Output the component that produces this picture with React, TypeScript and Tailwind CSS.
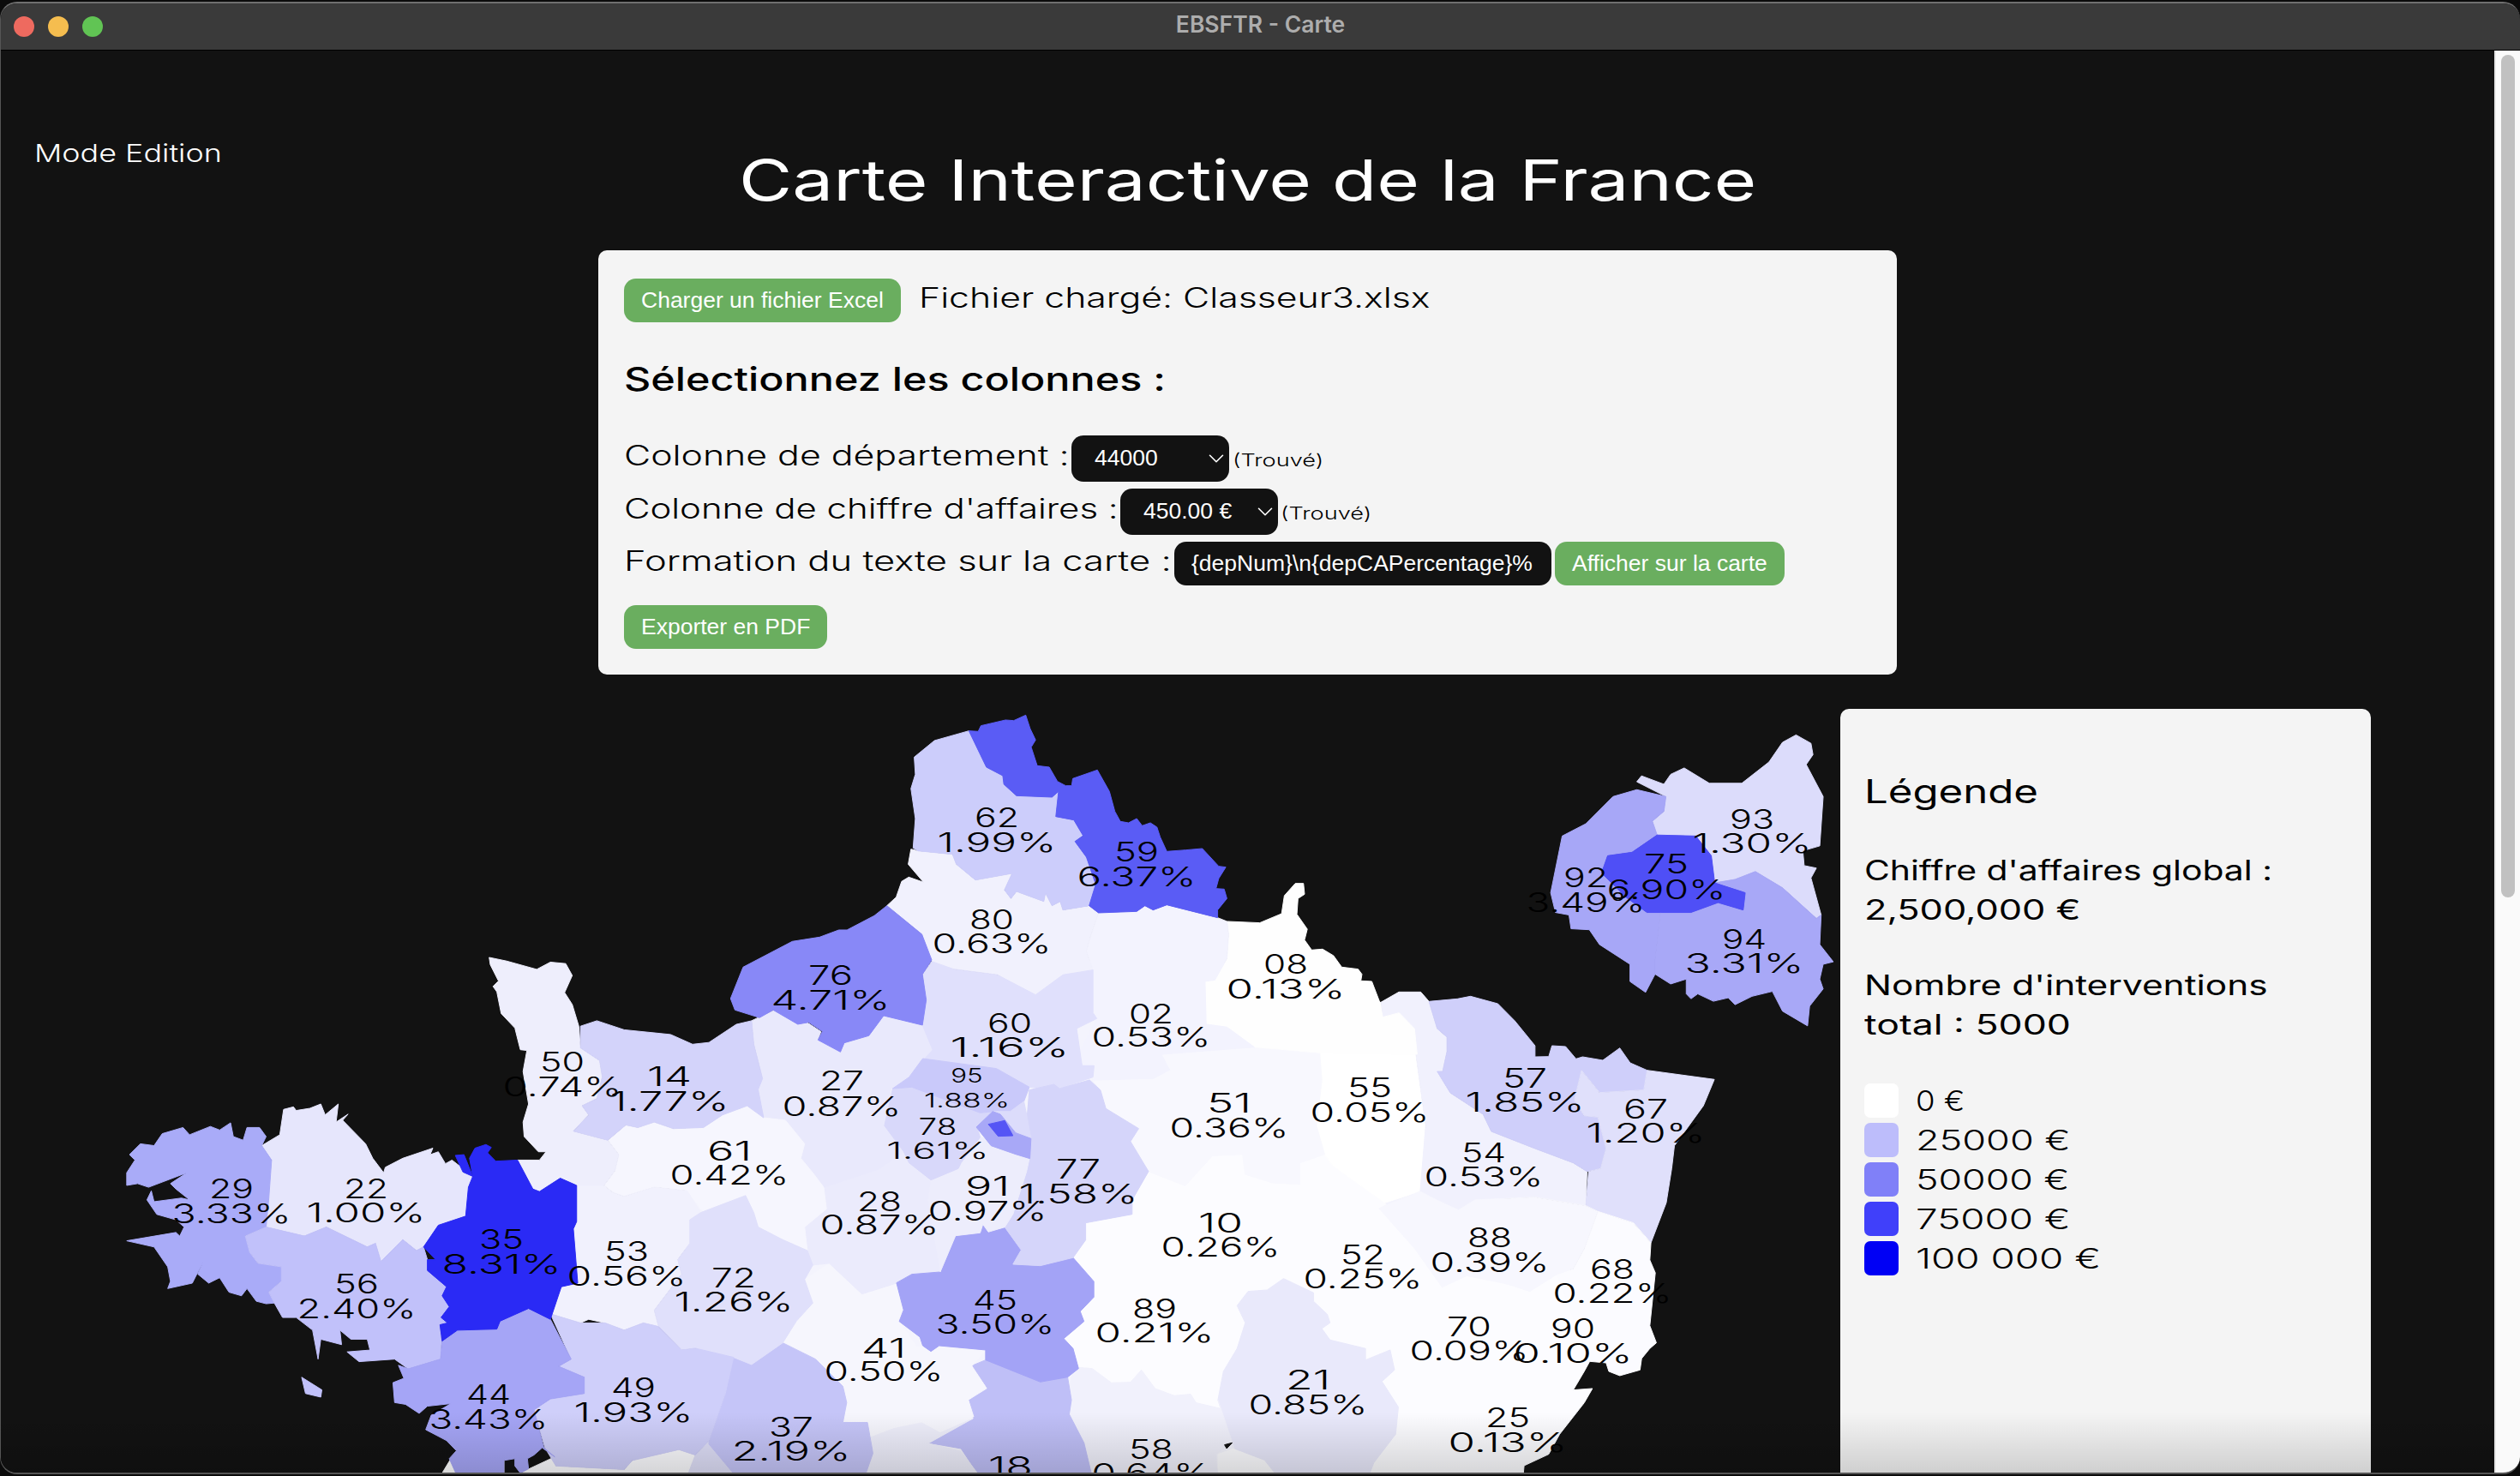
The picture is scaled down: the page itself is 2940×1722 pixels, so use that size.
import { useLayoutEffect, useRef, type ReactNode } from 'react'
import { ChevronDown } from 'lucide-react'

// The screenshot's extended display face isn't installed: Inter is stretched to its measured width.
function Wide({ w, className, children }: { w: number; className?: string; children: ReactNode }) {
  const inner = useRef<HTMLSpanElement>(null)

  useLayoutEffect(() => {
    const el = inner.current
    if (!el) return
    el.style.transform = `scaleX(${w / el.offsetWidth})`
  }, [w])

  return (
    <span className={`inline-block shrink-0 whitespace-nowrap ${className ?? ''}`} style={{ width: w }}>
      <span ref={inner} className="inline-block origin-left">
        {children}
      </span>
    </span>
  )
}

// Each department is traced in one of these crops of the reference.
const FRAMES = {
  a: 'translate(100 1060) scale(0.6378 0.4222)',
  b: 'translate(800 800) scale(0.6378 0.3333)',
  c: 'translate(1000 1200) scale(0.6378 0.3333)',
  d: 'translate(1700 820) scale(0.7908 0.5754)',
}

type Region = { frame: keyof typeof FRAMES; fill: string; points: string }

const REGIONS: Region[] = [
  { frame: 'c', fill: '#fcfcff', points: '395,802 418,740 418,680 503,650 503,600 533,500 600,550 650,445 705,440 710,510 760,540 810,545 810,470 855,440 870,480 965,610 1030,770 1070,905 1115,865 1180,890 1230,920 1280,860 1340,1165 1330,1200 1310,1265 1345,1260 1330,1310 1285,1420 1265,1490 1220,1530 1218,1570 660,1570 660,1490 690,1470 660,1300 665,1330 620,1310 610,1280 580,1285 545,1260 520,1195 500,1238 465,1240 430,1190 395,1185 405,1190 395,1120 378,1085 415,1025 408,990 433,940 433,885' },
  { frame: 'c', fill: '#ffffff', points: '846,85 871,-80 958,-92 961,-40 1020,60 1040,340 1030,570 965,610 870,480 855,440 840,340 850,180' },
  { frame: 'c', fill: '#f1f1fd', points: '958,-92 991,-128 1031,-128 1046,-95 1061,0 1079,30 1079,80 1071,150 1061,150 1085,225 1145,300 1160,360 1240,420 1310,470 1335,500 1333,620 1240,590 1130,600 1100,635 1060,600 1030,570 1040,340 1020,60 961,-40' },
  { frame: 'c', fill: '#cfcffa', points: '1046,-95 1098,-104 1122,-113 1172,-87 1203,-27 1240,60 1240,99 1265,98 1271,60 1296,63 1315,106 1327,99 1364,111 1395,68 1414,120 1445,146 1439,215 1358,224 1325,146 1312,250 1330,305 1355,310 1370,420 1360,490 1335,500 1310,470 1240,420 1160,360 1145,300 1085,225 1061,150 1071,150 1079,80 1079,30 1061,0' },
  { frame: 'c', fill: '#e0e0fb', points: '1325,146 1358,224 1439,215 1445,146 1568,178 1548,270 1495,410 1490,490 1480,610 1452,750 1420,680 1355,640 1333,620 1338,500 1360,490 1370,420 1355,310 1330,305 1312,250' },
  { frame: 'c', fill: '#fbfbff', points: '1355,640 1420,680 1452,750 1450,810 1460,855 1450,1040 1462,1100 1450,1120 1435,1155 1432,1195 1395,1215 1375,1200 1370,1170 1340,1165 1280,860 1310,840 1330,770' },
  { frame: 'c', fill: '#f7f7fe', points: '965,620 1030,570 1060,600 1100,635 1130,600 1240,590 1333,620 1355,640 1330,770 1310,840 1280,860 1230,920 1200,900 1180,890 1115,865 1070,905 1020,770 955,630' },
  { frame: 'c', fill: '#f8f8fe', points: '431,180 541,175 571,145 556,90 726,65 846,85 850,180 840,340 855,440 810,470 810,545 760,540 710,510 705,440 650,445 600,550 533,500 500,395 515,350 455,280 445,215' },
  { frame: 'c', fill: '#e9e9fb', points: '780,875 835,925 835,955 860,1000 865,1030 850,1050 865,1090 930,1120 930,1160 975,1125 983,1195 960,1235 990,1325 985,1420 945,1520 935,1570 770,1570 745,1510 690,1470 660,1300 670,1200 695,1120 710,1030 695,970 715,920 750,915' },
  { frame: 'c', fill: '#f1f1fc', points: '395,1185 430,1190 465,1240 500,1238 520,1195 545,1260 580,1285 610,1280 620,1310 665,1330 660,1300 690,1470 675,1450 670,1470 655,1490 660,1570 430,1570 400,1400 385,1330 390,1250' },
  { frame: 'c', fill: '#bfbff7', points: '235,1160 335,1237 385,1220 392,1300 388,1350 415,1450 430,1570 225,1570 190,1470 130,1450 160,1390 215,1360 205,1300 235,1250 210,1180' },

  { frame: 'a', fill: '#ffffff', points: '648,1570 668,1520 765,1525 765,1570' },
  { frame: 'a', fill: '#fbfbfe', points: '858,1515 860,1540 985,1550 1000,1525 1085,1495 1115,1510 1140,1480 1190,1570 780,1570' },
  { frame: 'a', fill: '#dfdff8', points: '1115,1510 1140,1470 1190,1570 1100,1570' },
  { frame: 'a', fill: '#f6f6fd', points: '1275,1200 1300,1140 1330,1090 1315,1025 1360,980 1420,1065 1483,1035 1495,1090 1488,1140 1520,1210 1531,1209 1545,1225 1560,1209 1646,1221 1621,1264 1648,1326 1614,1358 1623,1409 1563,1449 1529,1421 1478,1437 1436,1461 1385,1409 1392,1365 1385,1320 1335,1245' },
  { frame: 'a', fill: '#eeeefb', points: '1436,1461 1478,1437 1529,1421 1563,1449 1623,1409 1541,1478 1601,1500 1636,1570 1420,1570 1440,1505' },
  { frame: 'a', fill: '#c5c5f8', points: '1185,1240 1218,1260 1275,1200 1335,1245 1385,1320 1392,1365 1385,1420 1430,1420 1440,1505 1425,1570 1190,1570 1140,1480 1140,1470 1170,1340' },
  { frame: 'a', fill: '#ebebfc', points: '1308,690 1330,730 1350,770 1355,830 1315,880 1320,945 1330,985 1360,980 1420,1065 1483,1035 1511,1011 1563,1005 1541,806 1546,751 1506,703 1496,672 1450,720' },
  { frame: 'a', fill: '#e9e9fc', points: '1218,310 1260,280 1305,318 1320,315 1345,340 1340,360 1380,395 1390,370 1435,350 1460,295 1531,323 1550,391 1530,425 1506,470 1473,498 1461,601 1496,672 1450,720 1350,770 1330,730 1308,690 1315,650 1280,585 1240,578 1230,500 1238,470 1222,375' },
  { frame: 'a', fill: '#f6f6fe', points: '955,640 988,598 1010,605 1040,590 1075,608 1130,605 1165,570 1210,545 1240,578 1280,585 1315,650 1308,690 1330,730 1350,770 1355,830 1315,880 1320,945 1275,915 1230,880 1222,840 1207,793 1130,840 1100,780 1040,770 985,795 965,785 948,765 968,725 975,680' },
  { frame: 'a', fill: '#f1f1fd', points: '898,765 948,765 965,785 985,795 1040,770 1100,780 1125,840 1105,860 1105,925 1083,970 1090,1010 1040,1110 1048,1155 1020,1145 985,1165 950,1145 920,1135 905,1145 850,1120 870,1045 900,1035 892,885 898,865' },
  { frame: 'a', fill: '#e0e0fb', points: '1125,840 1207,793 1222,840 1230,880 1275,915 1320,945 1330,985 1315,1025 1330,1090 1300,1140 1275,1200 1218,1260 1185,1240 1115,1215 1090,1220 1048,1155 1040,1110 1090,1010 1083,970 1105,925 1105,860' },
  { frame: 'a', fill: '#cfcffa', points: '850,1120 905,1145 950,1145 985,1165 1020,1145 1048,1155 1090,1220 1115,1215 1185,1240 1170,1340 1140,1470 1115,1510 1085,1495 1000,1525 985,1550 860,1540 840,1490 820,1385 850,1355 912,1340 912,1295 865,1265 888,1245' },
  { frame: 'a', fill: '#eeeefc', points: '738,135 770,145 825,168 850,148 878,152 890,185 876,232 890,265 902,325 905,385 940,420 945,465 935,525 908,545 920,570 892,615 955,640 975,680 968,725 948,765 898,765 868,745 830,782 818,775 790,695 830,695 842,672 828,672 802,630 800,590 810,540 800,450 807,392 795,390 785,330 760,290 752,230 745,215 755,200 740,155' },
  { frame: 'a', fill: '#d3d3fa', points: '905,325 935,310 985,335 1070,348 1110,375 1140,370 1190,320 1218,310 1222,375 1238,470 1230,500 1240,578 1210,545 1165,570 1130,605 1075,608 1040,590 1010,605 988,598 955,640 892,615 920,570 908,545 935,525 945,465 940,420 905,385' },
  { frame: 'a', fill: '#e6e6fc', points: '322,655 355,625 362,555 380,548 385,558 410,552 430,540 438,570 462,540 458,590 480,568 470,585 512,650 525,690 545,730 548,715 580,690 635,662 630,680 645,672 658,705 670,695 700,730 710,745 695,850 645,875 618,935 605,945 580,915 540,975 530,925 515,935 440,880 400,905 330,880 340,695' },
  { frame: 'a', fill: '#a9abf8', points: '140,622 178,605 190,625 228,602 245,612 265,592 270,630 288,640 295,605 318,605 330,630 322,655 340,695 335,800 330,880 292,905 300,950 315,980 358,990 358,1030 335,1060 345,1090 330,1092 312,1085 295,1050 285,1070 262,1060 245,1020 225,1035 205,1010 215,975 195,1035 150,1050 155,1030 150,990 125,935 75,918 165,895 172,905 180,880 165,860 130,845 112,805 120,780 125,810 175,800 190,805 165,775 155,760 185,730 115,770 95,760 75,765 75,730 90,695 80,680 100,650 125,655' },
  { frame: 'a', fill: '#c1c1fa', points: '292,905 330,880 400,905 440,880 515,935 530,925 540,975 580,915 605,945 618,935 625,970 625,1000 660,1045 652,1070 665,1100 650,1130 662,1145 648,1150 651,1195 649,1245 590,1272 565,1245 500,1252 478,1225 520,1220 515,1190 485,1190 465,1165 468,1205 430,1190 425,1245 415,1165 385,1130 360,1130 345,1090 335,1060 358,1030 358,990 315,980 300,950' },
  { frame: 'a', fill: '#c1c1fa', points: '395,1295 432,1330 430,1350 402,1340' },
  { frame: 'a', fill: '#a5a5f6', points: '652,1195 680,1165 752,1162 758,1140 810,1105 850,1135 888,1245 865,1265 912,1295 912,1340 850,1355 820,1385 838,1490 858,1515 835,1490 820,1510 808,1520 810,1548 795,1560 785,1540 785,1520 765,1525 765,1570 680,1570 665,1520 678,1498 660,1470 622,1440 632,1400 668,1368 625,1375 610,1395 585,1370 565,1365 562,1310 582,1298 572,1262 590,1272 649,1245' },
  { frame: 'a', fill: '#2a2af5', points: '700,770 708,740 702,690 712,662 732,652 742,660 735,675 750,698 790,695 818,775 830,782 868,745 898,765 898,865 892,885 900,1035 870,1045 850,1135 810,1105 758,1140 752,1162 680,1165 652,1195 648,1150 662,1145 650,1130 665,1100 652,1070 660,1045 625,1000 625,970 640,970 618,935 645,875 695,850' },
  { frame: 'a', fill: '#2a2af5', points: '676,682 692,680 708,740 690,728' },

  { frame: 'b', fill: '#fefefe', points: '990,825 1050,830 1090,798 1095,735 1115,692 1130,692 1132,730 1120,745 1118,800 1137,852 1132,890 1145,925 1165,922 1185,945 1200,985 1230,992 1237,1010 1235,1033 1255,1035 1270,1110 1275,1160 1305,1145 1333,1200 1338,1290 1160,1285 1040,1265 990,1195 952,1185 950,1035 968,1030 990,955 993,870' },
  { frame: 'b', fill: '#f3f3fe', points: '755,795 825,790 840,770 855,785 880,767 973,812 990,825 993,870 990,955 968,1030 950,1035 952,1185 990,1195 1040,1265 870,1290 885,1345 855,1375 745,1380 747,1330 725,1330 715,1300 752,1165 745,1145 745,995 733,930 740,880' },
  { frame: 'b', fill: '#f1f1fd', points: '412,572 425,578 488,590 495,625 530,680 597,657 583,715 595,745 605,720 655,755 658,725 670,770 685,755 690,785 738,770 755,795 740,880 733,930 745,995 690,1012 640,1082 570,1012 490,992 470,1000 450,965 432,870 368,770 385,740 395,685 408,670 435,688 407,625' },
  { frame: 'b', fill: '#e0e0fc', points: '450,965 490,992 570,1012 640,1082 690,1012 745,995 745,1145 752,1165 715,1200 725,1330 747,1330 745,1370 690,1405 665,1415 630,1405 570,1340 520,1350 425,1330 452,1275 433,1188 440,1100 433,1010' },
  { frame: 'b', fill: '#cccdfb', points: '518,158 455,192 418,250 420,310 412,360 420,465 416,568 425,578 488,590 495,625 530,680 597,657 583,715 595,745 605,720 655,755 658,725 670,770 685,755 690,785 738,770 750,695 733,600 712,545 727,525 710,470 677,458 682,370 670,390 605,385 582,345 580,315 550,285' },
  { frame: 'b', fill: '#5a5cf5', points: '518,158 535,160 540,140 585,120 600,122 622,103 630,150 640,190 632,215 643,280 665,285 680,335 695,350 706,350 708,325 753,295 775,370 785,440 795,475 810,480 825,465 835,490 850,480 862,495 868,530 880,580 915,575 945,570 975,632 988,635 975,675 970,710 985,712 990,745 973,785 973,812 880,767 855,785 840,770 825,790 755,795 738,770 750,695 733,600 712,545 727,525 710,470 677,458 682,370 670,390 605,385 582,345 580,315 550,285' },
  { frame: 'b', fill: '#8888f7', points: '368,770 345,805 295,855 280,855 245,880 195,895 105,985 82,1095 90,1135 135,1162 160,1135 205,1185 225,1178 250,1210 242,1240 283,1282 290,1250 335,1225 362,1155 433,1188 440,1100 433,1010 450,960 432,870' },

  { frame: 'c', fill: '#a3a3f6', points: '180,725 225,715 230,685 240,712 270,695 300,775 285,825 335,830 395,802 433,885 433,940 408,990 415,1025 378,1085 395,1120 405,1190 385,1220 335,1237 235,1160 235,1125 150,1110 135,1130 120,1110 115,1080 77,1025 85,985 72,890 100,860 152,852' },
  { frame: 'c', fill: '#d5d5fa', points: '425,180 445,215 455,280 515,350 500,395 533,500 503,600 503,650 418,680 418,740 395,802 335,830 285,825 300,775 270,695 285,650 310,450 318,385 310,330 315,215 360,195 370,210' },
  { frame: 'c', fill: '#ededfc', points: '135,530 185,490 190,470 225,380 260,410 285,440 315,455 310,500 285,650 270,695 240,712 230,685 225,715 180,725 152,852 130,600' },
  { frame: 'c', fill: '#d8d8fa', points: '65,210 100,205 225,295 250,290 220,350 225,380 190,470 185,490 135,530 95,470 85,430 50,340' },
  { frame: 'c', fill: '#c9c9fa', points: '120,105 255,140 315,205 305,255 280,290 250,290 225,295 100,205 65,210 95,170' },
  { frame: 'c', fill: '#dcdcfb', points: '250,290 262,300 290,365 318,385 312,320 305,255 280,290' },
  { frame: 'c', fill: '#a8a8f7', points: '248,290 218,345 245,410 290,440 316,455 318,385 290,365 262,300' },
  { frame: 'c', fill: '#5555f5', points: '240,335 270,322 285,375 258,377' },
  { frame: 'c', fill: '#121212', points: '672,1457 686,1450 676,1470' },

  { frame: 'd', fill: '#dcdcfb', points: '265,160 272,148 305,165 315,145 335,132 372,163 420,163 460,120 480,80 500,65 522,82 525,105 515,125 540,190 535,290 510,300 512,330 530,335 522,355 537,430 530,437 480,375 440,342 410,358 380,365 375,310 352,270 295,268 288,240 305,220 308,190' },
  { frame: 'd', fill: '#a7a7f7', points: '265,176 308,190 305,220 288,240 295,268 258,303 222,310 213,345 250,395 280,425 300,425 292,520 292,550 278,587 255,565 255,530 210,490 195,460 168,458 165,430 145,425 138,385 155,270 190,245 230,190' },
  { frame: 'd', fill: '#a8a8f7', points: '300,425 345,425 385,405 422,420 425,385 380,365 410,358 440,342 480,375 530,437 537,430 535,490 555,525 540,530 535,560 540,580 520,615 517,655 480,625 465,585 435,595 410,612 400,598 378,605 355,590 345,600 338,590 338,560 315,570 292,550 292,520' },
  { frame: 'd', fill: '#4f4ff6', points: '295,268 352,270 375,310 380,365 425,385 422,420 385,405 345,425 300,425 280,425 250,395 213,345 222,310 258,303' },
]

// id, share, centre x, y of each of the two lines, font size
const LABELS: [string, string, number, number, number, number?][] = [
  ['62', '1.99%', 1163, 953, 982], ['59', '6.37%', 1326, 993, 1022], ['80', '0.63%', 1157, 1072, 1100],
  ['76', '4.71%', 969, 1137, 1166], ['08', '0.13%', 1500, 1124, 1153], ['60', '1.16%', 1178, 1193, 1221],
  ['02', '0.53%', 1343, 1182, 1209], ['95', '1.88%', 1128, 1254, 1283, 0.72], ['55', '0.05%', 1598, 1268, 1297],
  ['51', '0.36%', 1434, 1286, 1315], ['57', '1.85%', 1779, 1257, 1285], ['67', '1.20%', 1920, 1293, 1321],
  ['54', '0.53%', 1731, 1344, 1372], ['78', '1.61%', 1094, 1314, 1342, 0.86], ['91', '0.97%', 1152, 1383, 1412],
  ['77', '1.58%', 1258, 1363, 1392], ['28', '0.87%', 1026, 1401, 1428], ['10', '0.26%', 1424, 1426, 1454],
  ['52', '0.25%', 1590, 1463, 1491], ['88', '0.39%', 1738, 1443, 1472], ['68', '0.22%', 1881, 1480, 1508],
  ['45', '3.50%', 1161, 1516, 1544], ['89', '0.21%', 1347, 1526, 1554], ['70', '0.09%', 1714, 1547, 1575],
  ['90', '0.10%', 1835, 1549, 1578], ['41', '0.50%', 1031, 1572, 1599], ['21', '0.85%', 1526, 1609, 1638],
  ['25', '0.13%', 1759, 1653, 1682], ['58', '0.64%', 1343, 1690, 1718], ['18', '1.20%', 1179, 1710, 1739],
  ['50', '0.74%', 656, 1238, 1267], ['14', '1.77%', 781, 1255, 1284], ['27', '0.87%', 982, 1260, 1290],
  ['61', '0.42%', 851, 1342, 1370], ['29', '3.33%', 270, 1386, 1415], ['22', '1.00%', 427, 1386, 1414],
  ['35', '8.31%', 585, 1445, 1474], ['53', '0.56%', 731, 1459, 1488], ['72', '1.26%', 856, 1490, 1518],
  ['56', '2.40%', 416, 1497, 1526], ['44', '3.43%', 570, 1626, 1655], ['49', '1.93%', 739, 1618, 1647],
  ['37', '2.19%', 923, 1664, 1692], ['93', '1.30%', 2044, 955, 983], ['75', '6.90%', 1944, 1007, 1037],
  ['92', '3.49%', 1850, 1023, 1052], ['94', '3.31%', 2035, 1095, 1123],
]

const LEGEND = [
  { label: '0 €', width: 57, swatch: 'bg-white' },
  { label: '25000 €', width: 180, swatch: 'bg-[#bdbdfb]' },
  { label: '50000 €', width: 180, swatch: 'bg-[#8080f8]' },
  { label: '75000 €', width: 180, swatch: 'bg-[#4040fa]' },
  { label: '100 000 €', width: 216, swatch: 'bg-[#0000f5]' },
]

const BUTTON = 'h-[51px] shrink-0 rounded-[14px] bg-[#6aae5f] px-5 font-[Liberation_Sans,Arial,sans-serif] text-[26.5px] whitespace-nowrap text-white'
const FIELD = 'rounded-[14px] bg-[#121212] font-[Liberation_Sans,Arial,sans-serif] text-[26.5px] text-white'

function FrenchMap() {
  return (
    <svg viewBox="1 820 2146 898" className="block h-[898px] w-[2146px] shrink-0">
      <polygon points="800,1300 1100,1150 1400,1100 1700,1350 1850,1500 1830,1600 1730,1718 900,1718 800,1550" fill="#f4f4fd" />
      {REGIONS.map((region, index) => (
        <polygon
          key={index}
          transform={FRAMES[region.frame]}
          points={region.points}
          fill={region.fill}
          stroke={region.fill}
          strokeWidth={1}
          vectorEffect="non-scaling-stroke"
        />
      ))}
      {LABELS.map(([id, share, x, y1, y2, scale = 1]) => (
        <g key={id} textAnchor="middle" dominantBaseline="central" fill="#000" fontSize={31 * scale} fontWeight={300}>
          <text x={x} y={y1} textLength={52 * scale} lengthAdjust="spacingAndGlyphs">{id}</text>
          <text x={x} y={y2} textLength={139 * scale} lengthAdjust="spacingAndGlyphs">{share}</text>
        </g>
      ))}
    </svg>
  )
}

function ColumnSelect({ value }: { value: string }) {
  return (
    <span className="relative block shrink-0">
      <select defaultValue={value} className={`${FIELD} block h-[54px] w-[184px] appearance-none pl-[27px]`}>
        <option>{value}</option>
      </select>
      <ChevronDown className="pointer-events-none absolute top-[12px] right-0 size-[30px] text-white" strokeWidth={1.3} />
    </span>
  )
}

function ControlsPanel() {
  return (
    <section className="mx-auto h-[495px] w-[1515px] rounded-[10px] bg-[#f4f4f4] pt-[33px] pl-[30px] text-black">
      <div className="flex h-[51px] items-center gap-[21px]">
        <button className={BUTTON}>Charger un fichier Excel</button>
        <Wide w={597} className="-translate-y-[3px] text-[32px] font-light">Fichier chargé: Classeur3.xlsx</Wide>
      </div>

      <h2 className="mt-[41px] h-[50px] text-[38px] leading-[50px] font-medium">
        <Wide w={632}>Sélectionnez les colonnes :</Wide>
      </h2>

      <div className="mt-[41px] flex flex-col gap-[8px] text-[32px] font-light">
        <div className="flex h-[54px] items-center">
          <Wide w={519} className="-translate-y-[3px]">Colonne de département :</Wide>
          <span className="ml-[3px]"><ColumnSelect value="44000" /></span>
          <Wide w={106} className="ml-[4px] pt-[4px] text-[20px]">(Trouvé)</Wide>
        </div>
        <div className="flex h-[54px] items-center">
          <Wide w={576} className="-translate-y-[3px]">Colonne de chiffre d'affaires :</Wide>
          <span className="ml-[3px]"><ColumnSelect value="450.00 €" /></span>
          <Wide w={106} className="ml-[3px] pt-[4px] text-[20px]">(Trouvé)</Wide>
        </div>
        <div className="flex h-[51px] items-center">
          <Wide w={639} className="-translate-y-[3px]">Formation du texte sur la carte :</Wide>
          <input
            readOnly
            value="{depNum}\n{depCAPercentage}%"
            className={`${FIELD} ml-[3px] h-[51px] w-[440px] pl-[20px]`}
          />
          <button className={`${BUTTON} ml-[4px]`}>Afficher sur la carte</button>
        </div>
      </div>

      <button className={`${BUTTON} mt-[23px]`}>Exporter en PDF</button>
    </section>
  )
}

function LegendPanel() {
  return (
    <aside className="mt-[7px] h-[1000px] w-[619px] shrink-0 rounded-[10px] bg-[#f4f4f4] pt-[71px] pl-[28px] text-black">
      <h3 className="h-[50px] text-[38px] leading-[50px]"><Wide w={203}>Légende</Wide></h3>

      <div className="mt-[45px] text-[32px] leading-[46px]">
        <div className="h-[46px]"><Wide w={476}>Chiffre d'affaires global :</Wide></div>
        <div className="h-[46px]"><Wide w={253}>2,500,000 €</Wide></div>
      </div>

      <div className="mt-[42px] text-[32px] leading-[46px]">
        <div className="h-[46px]"><Wide w={470}>Nombre d'interventions</Wide></div>
        <div className="h-[46px]"><Wide w={241}>total : 5000</Wide></div>
      </div>

      <ul className="mt-[45px] flex flex-col gap-[6px]">
        {LEGEND.map((item) => (
          <li key={item.label} className="flex h-[40px] items-center gap-[20px] text-[32px] font-light">
            <span className={`size-[40px] rounded-[7px] ${item.swatch}`} />
            <Wide w={item.width} className="pt-[2px]">{item.label}</Wide>
          </li>
        ))}
      </ul>
    </aside>
  )
}

export default function App() {
  return (
    <div className="h-[1722px] w-[2940px] overflow-hidden bg-[#0b0b0b] pt-[2px] font-[Inter,sans-serif]">
      <div className="flex h-[1718px] flex-col overflow-hidden rounded-[20px] border-t-2 border-b-2 border-l border-[#6f6f6f] border-b-[#555555] border-l-[#555555]">
        <header className="relative flex h-[55px] shrink-0 items-center justify-center border-b border-black bg-[#3a3a3a]">
          <div className="absolute left-[15px] flex gap-[16px]">
            <span className="size-[24px] rounded-full bg-[#ee6a5f]" />
            <span className="size-[24px] rounded-full bg-[#f5bd4f]" />
            <span className="size-[24px] rounded-full bg-[#61c454]" />
          </div>
          <span className="pb-[5px] text-[26.5px] font-semibold text-[#adadad]">EBSFTR - Carte</span>
        </header>

        <div className="flex min-h-0 flex-1">
          <main className="relative min-w-0 flex-1 overflow-hidden bg-[#121212] pt-[100px]">
            <div className="grid grid-cols-[1fr_auto_1fr] items-start">
              <span className="pl-[39px] text-[29px] leading-10 font-light text-white">
                <Wide w={219}>Mode Edition</Wide>
              </span>
              <h1 className="mt-[9px] h-[84px] text-[66px] leading-[84px] text-white">
                <Wide w={1188}>Carte Interactive de la France</Wide>
              </h1>
              <span />
            </div>

            <div className="mt-[40px]"><ControlsPanel /></div>

            <div className="mt-[33px] flex">
              <FrenchMap />
              <LegendPanel />
            </div>

            <div className="pointer-events-none absolute inset-x-0 bottom-0 h-[70px] bg-gradient-to-b from-transparent to-black/15" />
          </main>

          <div className="w-[30px] shrink-0 border-l-2 border-[#e6e6e6] bg-[#fafafa] pt-[5px] pl-[6px]">
            <div className="h-[983px] w-[16px] rounded-full bg-[#c1c1c1]" />
          </div>
        </div>
      </div>
    </div>
  )
}
